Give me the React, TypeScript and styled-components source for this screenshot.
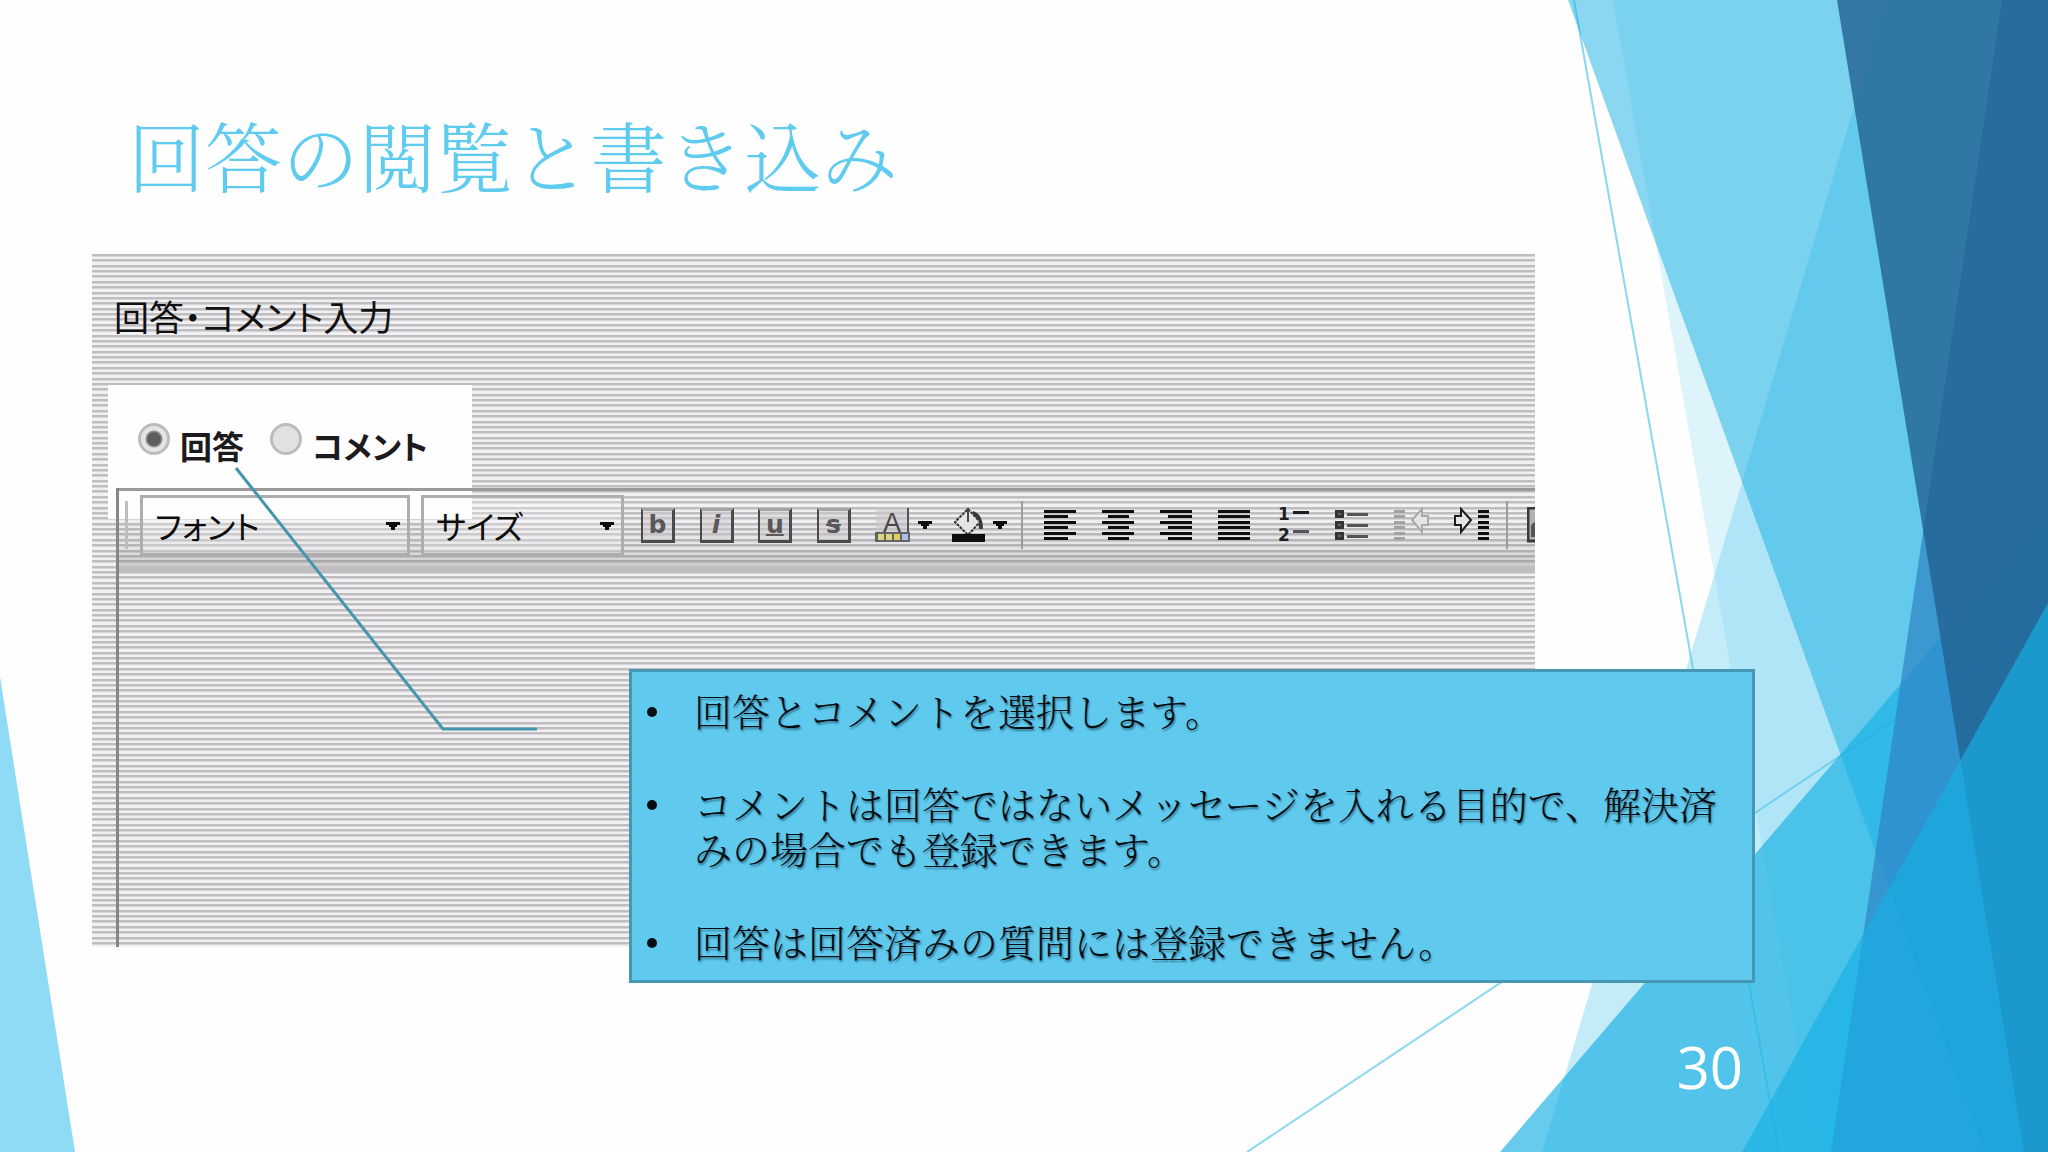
import React from 'react';
import styled, { createGlobalStyle } from 'styled-components';

const GOTHIC = '"Noto Sans CJK JP", "Liberation Sans", sans-serif';
const MINCHO = '"Noto Serif CJK JP", "Noto Sans CJK JP", serif';

/* Eight scan lines share one 43px tile */
const lineStarts = [0, 5, 11, 16, 21, 27, 32, 38, 43];
const scanLines = lineStarts
  .slice(0, -1)
  .map((y, i) => `#bfbdc0 ${y}px ${y + 2}px, #d6d5d7 ${y + 2}px ${y + 3}px, #f1f0f2 ${y + 3}px ${lineStarts[i + 1]}px`)
  .join(', ');

const Global = createGlobalStyle`
  * { box-sizing: border-box; }
  body { margin: 0; background: #fefefe; }
`;

const Slide = styled.div`
  position: relative;
  display: flex;
  flex-direction: column;
  min-height: 100vh;
  overflow: hidden;
  font-family: ${GOTHIC};
`;

const Backdrop = styled.svg`
  position: absolute;
  inset: 0;
  width: 100%;
  height: 100%;
`;

const Header = styled.header`
  position: relative;
  height: 254px;
  padding: 98px 128px 0;
`;

const Title = styled.h1`
  margin: 0;
  font: 300 77px/112px ${MINCHO};
  color: #5fcbef;
`;

const Stage = styled.main`
  position: relative;
  flex: 1;
  display: flex;
  padding: 0 513px 0 92px;
`;

const Capture = styled.section`
  position: relative;
  flex: 1;
  min-width: 0;
  display: flex;
  flex-direction: column;
  overflow: hidden;
  background: repeating-linear-gradient(to bottom, ${scanLines});
`;

const Spotlight = styled.div`
  position: absolute;
  left: 16px;
  top: 131px;
  width: 364px;
  height: 134px;
  background: #fefefe;
`;

const Caption = styled.h2`
  margin: 0;
  padding: 36px 22px 0;
  height: 164px;
  font-size: 35px;
  font-weight: 400;
  line-height: 52px;
  font-feature-settings: 'palt';
  color: #111;
`;

const Choices = styled.fieldset`
  position: relative;
  display: flex;
  gap: 26px;
  height: 70px;
  margin: 0;
  padding: 0 46px;
  border: 0;
`;

const Choice = styled.label`
  display: flex;
  gap: 10px;
  height: 54px;
  align-items: center;
  font-size: 32px;
  font-weight: 700;
  line-height: 54px;
  font-feature-settings: 'palt';
  color: #1d1b1e;
`;

const Radio = styled.input`
  appearance: none;
  width: 32px;
  height: 32px;
  margin: 0 0 12px;
  border: 3px solid #bcbcbc;
  border-radius: 50%;
  background: #e2e1e2;
  &:checked {
    background: radial-gradient(circle, #5d5c5d 0 6px, #9a999a 8px, #e6e5e6 9px);
  }
`;

const Editor = styled.div`
  position: relative;
  flex: 1;
  display: flex;
  flex-direction: column;
  margin-left: 24px;
  border-left: 3px solid #868587;
`;

const Toolbar = styled.div`
  display: flex;
  height: 85px;
  padding: 4px 0 18px 6px;
  align-items: center;
  border-top: 3px solid #9b999c;
  background: linear-gradient(to bottom, rgba(0, 0, 0, 0) 0 30%, rgba(60, 58, 62, 0.08) 70%, rgba(60, 58, 62, 0.2) 91%, #bfbdc0 92%);
`;

const Grip = styled.span`
  flex: none;
  width: 3px;
  height: 48px;
  margin-right: 12px;
  background: #bdbcbe;
`;

const Picker = styled.div<{ $width: number }>`
  position: relative;
  flex: none;
  width: ${(p) => p.$width}px;
  height: 61px;
  margin-right: 11px;
  svg {
    position: absolute;
    right: 10px;
    top: 27px;
    pointer-events: none;
  }
`;

const Select = styled.select`
  appearance: none;
  width: 100%;
  height: 100%;
  padding: 0 12px;
  border: 3px solid #aeacaf;
  border-radius: 0;
  background: rgba(255, 255, 255, 0.25);
  font: 400 32px/52px ${GOTHIC};
  font-feature-settings: 'palt';
  color: #0c0c0c;
`;

const Group = styled.div<{ $width: number; $before: number }>`
  flex: none;
  display: flex;
  justify-content: space-between;
  align-items: center;
  width: ${(p) => p.$width}px;
  margin-left: ${(p) => p.$before}px;
`;

const Tool = styled.button`
  flex: none;
  display: flex;
  align-items: center;
  gap: 8px;
  padding: 0;
  border: 0;
  background: none;
`;

const Divider = styled.span<{ $before: number }>`
  flex: none;
  width: 2px;
  height: 48px;
  margin-left: ${(p) => p.$before}px;
  background: #9d9b9e;
`;

const LetterBox = styled.span<{ $italic?: boolean; $line?: string }>`
  width: 34px;
  height: 35px;
  border: solid #4b494c;
  border-width: 3px 3px 3px 2px;
  border-top-color: #a5a3a6;
  background: rgba(205, 203, 206, 0.5);
  font: ${(p) => (p.$italic ? 'italic' : 'normal')} 700 25px/28px "DejaVu Sans", "Liberation Sans", sans-serif;
  text-decoration: ${(p) => p.$line || 'none'};
  text-decoration-thickness: 2px;
  text-align: center;
  color: #59575a;
`;

const Page = styled.textarea`
  flex: 1;
  width: 100%;
  border: 0;
  padding: 16px;
  resize: none;
  background: none;
  font: 34px/48px ${GOTHIC};
`;

const Pointer = styled.svg`
  position: absolute;
  left: 234px;
  top: 212px;
`;

const Callout = styled.aside`
  position: absolute;
  left: 629px;
  right: 293px;
  top: 415px;
  border: 3px solid #4697b4;
  background: #60caee;
`;

const Points = styled.ul`
  display: flex;
  flex-direction: column;
  gap: 48px;
  margin: 0;
  padding: 15px 18px 17px 62px;
  list-style: none;
`;

const Point = styled.li`
  position: relative;
  font: 300 38px/45px ${MINCHO};
  text-shadow: 1px 2px 2px rgba(0, 40, 60, 0.5);
  color: #060d12;
  &::before {
    content: '';
    position: absolute;
    left: -47px;
    top: 20px;
    width: 10px;
    height: 10px;
    border-radius: 50%;
    background: #060d12;
  }
`;

const Footer = styled.footer`
  position: relative;
  display: flex;
  justify-content: flex-end;
  height: 205px;
  padding: 80px 305px 0 0;
  font: 500 58px/80px "Open Sans", "Noto Sans", sans-serif;
  color: #fff;
`;

const Arrow = () => (
  <svg width="14" height="8" viewBox="0 0 14 8" aria-hidden="true">
    <path d="M0 0H14V3H11V5H9V8H5V5H3V3H0Z" fill="#0d0d0d" />
  </svg>
);

const bars: Record<string, number[][]> = {
  left: [[0, 32], [0, 24], [0, 32], [0, 24], [0, 32], [0, 24]],
  center: [[0, 32], [6, 21], [0, 32], [6, 21], [0, 32], [6, 21]],
  right: [[0, 32], [8, 24], [0, 32], [8, 24], [0, 32], [8, 24]],
  justify: [[0, 32], [0, 32], [0, 32], [0, 32], [0, 32], [0, 32]],
};
const barTops = [3, 8, 14, 19, 25, 30];

const AlignIcon = ({ kind }: { kind: string }) => (
  <svg width="33" height="36" viewBox="0 0 33 36" aria-hidden="true">
    {bars[kind].map(([x, w], i) => (
      <rect key={i} x={x} y={barTops[i]} width={w} height="3" fill="#0e0d0f" />
    ))}
  </svg>
);

const NumberedIcon = () => (
  <svg width="33" height="44" viewBox="0 0 33 44" aria-hidden="true">
    <g fontFamily="DejaVu Sans, sans-serif" fontWeight="700" fontSize="17" fill="#1f1e20">
      <text x="1" y="17">1</text>
      <text x="1" y="38">2</text>
    </g>
    <path d="M16 8h16v3H16z" fill="#1f1e20" />
    <path d="M16 27h16v3H16z" fill="#555356" />
  </svg>
);

const BulletedIcon = () => (
  <svg width="33" height="36" viewBox="0 0 33 36" aria-hidden="true">
    {[3, 14, 25].map((y) => (
      <g key={y}>
        <rect x="0" y={y} width="9" height="8" fill="#343235" />
        <rect x="3" y={y + 3} width="3" height="2" fill="#6c6a6d" />
        <rect x="12" y={y + 3} width="21" height="3" fill="#555356" />
      </g>
    ))}
  </svg>
);

const IndentIcon = ({ out }: { out?: boolean }) => (
  <svg width="36" height="36" viewBox="0 0 36 36" aria-hidden="true">
    <g transform={out ? 'translate(36 0) scale(-1 1)' : undefined}>
      <path d="M1 9H7V2L17 13L7 25V18H1Z" fill="#e6e4e7" stroke={out ? '#aaa8ab' : '#1b1a1c'} strokeWidth="2" />
      {barTops.map((y) => (
        <rect key={y} x="24" y={y} width="11" height="3" fill={out ? '#a3a1a4' : '#0e0d0f'} />
      ))}
    </g>
  </svg>
);

const TextColorIcon = () => (
  <svg width="35" height="36" viewBox="0 0 35 36" aria-hidden="true">
    <rect x="1" y="1" width="33" height="26" fill="#c9c7ca" fillOpacity="0.6" />
    <rect x="32" y="1" width="2" height="34" fill="#555356" />
    <text x="17" y="25" textAnchor="middle" fontFamily="Liberation Sans, sans-serif" fontSize="27" fill="#4a484b">A</text>
    <rect x="0" y="25" width="35" height="10" fill="#656366" />
    {['#dcd77a', '#dcd77a', '#e0cf62', '#a5c3ea'].map((c, i) => (
      <rect key={i} x={3 + i * 8} y="27" width="6" height="6" fill={c} />
    ))}
  </svg>
);

const FillIcon = () => (
  <svg width="33" height="36" viewBox="0 0 33 36" aria-hidden="true">
    <path d="M21 4Q31 7 31 22H27Q27 13 20 9Z" fill="#3b393c" />
    <path d="M16 2L28 15L16 28L3 15Z" fill="#e6e4e7" stroke="#343235" strokeWidth="2" strokeDasharray="3 1" />
    <path d="M16 1V15" stroke="#4a484b" strokeWidth="2" />
    <rect x="0" y="27" width="33" height="8" fill="#0e0d0f" />
  </svg>
);

const ImageIcon = () => (
  <svg width="34" height="36" viewBox="0 0 34 36" aria-hidden="true">
    <rect x="1" y="1" width="32" height="33" fill="#b3b1b4" stroke="#3b393c" strokeWidth="3" />
    <path d="M4 30V18L9 14L16 24L24 16L30 30Z" fill="#555356" />
  </svg>
);

export default function App() {
  return (
    <Slide>
      <Global />
      <Backdrop viewBox="0 0 2048 1152" preserveAspectRatio="none" aria-hidden="true">
        <g stroke="#5fcbef" strokeOpacity="0.75" strokeWidth="2">
          <path d="M1574 0L1779 1152" />
          <path d="M2047 618L1247 1152" />
        </g>
        <path d="M1886 0H2048V1152H1542Z" fill="#5fcbef" fillOpacity="0.36" />
        <path d="M1613 0H2048V1152H1816Z" fill="#5fcbef" fillOpacity="0.2" />
        <path d="M2048 512V1152H1500Z" fill="#17b0e4" fillOpacity="0.66" />
        <path d="M1568 0H2048V1152H1984Z" fill="#17b0e4" fillOpacity="0.5" />
        <path d="M2002 0H2048V1152H1831Z" fill="#2e83c3" fillOpacity="0.7" />
        <path d="M1837 0H2048V1152H2024Z" fill="#226292" fillOpacity="0.8" />
        <path d="M2048 603V1152H1742Z" fill="#17b0e4" fillOpacity="0.66" />
        <path d="M0 677L75 1152H0Z" fill="#5fcbef" fillOpacity="0.7" />
      </Backdrop>

      <Header>
        <Title>回答の閲覧と書き込み</Title>
      </Header>

      <Stage>
        <Capture>
          <Spotlight />
          <Caption>回答・コメント入力</Caption>
          <Choices aria-label="種別">
            <Choice>
              <Radio type="radio" name="kind" defaultChecked />
              回答
            </Choice>
            <Choice>
              <Radio type="radio" name="kind" />
              コメント
            </Choice>
          </Choices>
          <Editor>
            <Toolbar role="toolbar">
              <Grip />
              <Picker $width={270}>
                <Select aria-label="フォント">
                  <option>フォント</option>
                </Select>
                <Arrow />
              </Picker>
              <Picker $width={203}>
                <Select aria-label="サイズ">
                  <option>サイズ</option>
                </Select>
                <Arrow />
              </Picker>
              <Group $width={210} $before={6}>
                <Tool aria-label="太字"><LetterBox>b</LetterBox></Tool>
                <Tool aria-label="斜体"><LetterBox $italic>i</LetterBox></Tool>
                <Tool aria-label="下線"><LetterBox $line="underline">u</LetterBox></Tool>
                <Tool aria-label="取り消し線"><LetterBox $line="line-through">s</LetterBox></Tool>
              </Group>
              <Group $width={132} $before={24}>
                <Tool aria-label="文字色"><TextColorIcon /><Arrow /></Tool>
                <Tool aria-label="塗りつぶし"><FillIcon /><Arrow /></Tool>
              </Group>
              <Divider $before={14} />
              <Group $width={446} $before={21}>
                <Tool aria-label="左揃え"><AlignIcon kind="left" /></Tool>
                <Tool aria-label="中央揃え"><AlignIcon kind="center" /></Tool>
                <Tool aria-label="右揃え"><AlignIcon kind="right" /></Tool>
                <Tool aria-label="両端揃え"><AlignIcon kind="justify" /></Tool>
                <Tool aria-label="番号付きリスト"><NumberedIcon /></Tool>
                <Tool aria-label="箇条書き"><BulletedIcon /></Tool>
                <Tool aria-label="インデント解除"><IndentIcon out /></Tool>
                <Tool aria-label="インデント"><IndentIcon /></Tool>
              </Group>
              <Divider $before={16} />
              <Group $width={34} $before={19}>
                <Tool aria-label="画像"><ImageIcon /></Tool>
              </Group>
            </Toolbar>
            <Page aria-label="本文" />
          </Editor>
        </Capture>
        <Pointer width="306" height="266" viewBox="0 0 306 266" aria-hidden="true">
          <path d="M2 2L209 263H303" fill="none" stroke="#4596ad" strokeWidth="3" />
        </Pointer>
        <Callout>
          <Points>
            <Point>回答とコメントを選択します。</Point>
            <Point>コメントは回答ではないメッセージを入れる目的で、解決済みの場合でも登録できます。</Point>
            <Point>回答は回答済みの質問には登録できません。</Point>
          </Points>
        </Callout>
      </Stage>

      <Footer>30</Footer>
    </Slide>
  );
}
